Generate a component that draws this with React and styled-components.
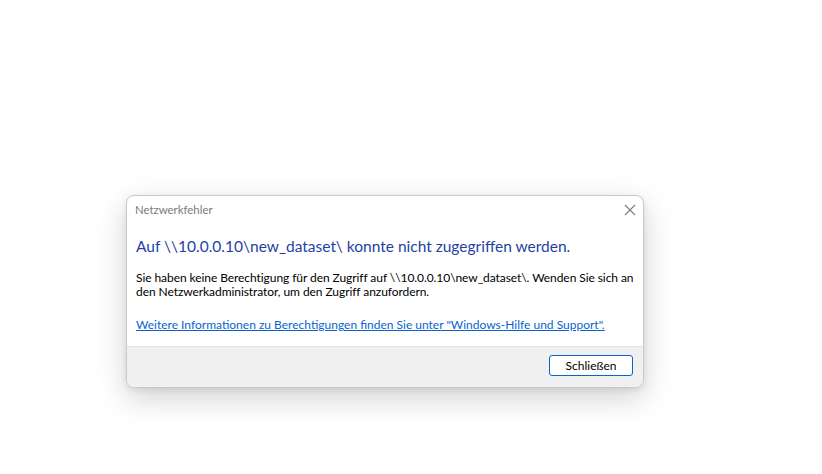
import React from "react";
import styled, { createGlobalStyle } from "styled-components";

const GlobalStyle = createGlobalStyle`
  html, body {
    margin: 0;
    padding: 0;
    background: #ffffff;
  }
  body {
    font-family: Lato, "Noto Sans", sans-serif;
  }
`;

const Page = styled.div`
  width: 822px;
  height: 474px;
  box-sizing: border-box;
  padding: 195px 0 0 126px;
  background: #ffffff;
`;

const Dialog = styled.div`
  width: 518px;
  box-sizing: border-box;
  display: flex;
  flex-direction: column;
  background: #ffffff;
  border: 1px solid #c9c9c9;
  border-radius: 8px;
  overflow: hidden;
  box-shadow: 0 10px 30px rgba(0, 0, 0, 0.18), 0 2px 6px rgba(0, 0, 0, 0.08);
`;

const TitleBar = styled.div`
  height: 27px;
  display: flex;
  align-items: center;
  justify-content: space-between;
  padding: 0 2px 0 8px;
`;

const Title = styled.span`
  font-size: 11.4px;
  color: #7a7a7a;
`;

const CloseButton = styled.button`
  width: 22px;
  height: 22px;
  border: none;
  background: transparent;
  display: flex;
  align-items: center;
  justify-content: center;
  padding: 0;
  cursor: pointer;
`;

const Content = styled.div`
  padding: 12px 4px 14px 9px;
  display: flex;
  flex-direction: column;
`;

const Heading = styled.h1`
  margin: 0;
  font-size: 15.5px;
  font-weight: 400;
  color: #1f3fa3;
  line-height: 22px;
`;

const Message = styled.p`
  margin: 14px 0 0;
  font-size: 12px;
  line-height: 14px;
  letter-spacing: -0.07px;
  color: #000000;
  white-space: nowrap;
`;

const HelpLink = styled.a`
  margin-top: 18px;
  font-size: 12px;
  line-height: 15px;
  color: #0a63d0;
  text-decoration: underline;
  cursor: pointer;
`;

const Footer = styled.div`
  height: 41px;
  display: flex;
  align-items: flex-start;
  justify-content: flex-end;
  padding: 8px 10px 0;
  box-sizing: border-box;
  background: #f0f0f0;
  border-top: 1px solid #dfdfdf;
`;

const Button = styled.button`
  width: 84px;
  height: 21px;
  box-sizing: border-box;
  border: 1px solid #0a63d0;
  border-radius: 3px;
  background: #ffffff;
  font-family: Lato, "Noto Sans", sans-serif;
  font-size: 12px;
  color: #000000;
  padding: 0;
  cursor: pointer;
`;

const CloseIcon = () => (
  <svg width="12" height="12" viewBox="0 0 12 12">
    <path d="M1 1 L11 11 M11 1 L1 11" stroke="#7d7d7d" strokeWidth="1.1" fill="none" />
  </svg>
);

export default function App() {
  return (
    <>
      <GlobalStyle />
      <Page>
        <Dialog>
          <TitleBar>
            <Title>Netzwerkfehler</Title>
            <CloseButton aria-label="Schließen">
              <CloseIcon />
            </CloseButton>
          </TitleBar>
          <Content>
            <Heading>Auf \\10.0.0.10\new_dataset\ konnte nicht zugegriffen werden.</Heading>
            <Message>
              Sie haben keine Berechtigung für den Zugriff auf \\10.0.0.10\new_dataset\. Wenden Sie sich an
              <br />
              den Netzwerkadministrator, um den Zugriff anzufordern.
            </Message>
            <HelpLink>Weitere Informationen zu Berechtigungen finden Sie unter "Windows-Hilfe und Support".</HelpLink>
          </Content>
          <Footer>
            <Button>Schließen</Button>
          </Footer>
        </Dialog>
      </Page>
    </>
  );
}
